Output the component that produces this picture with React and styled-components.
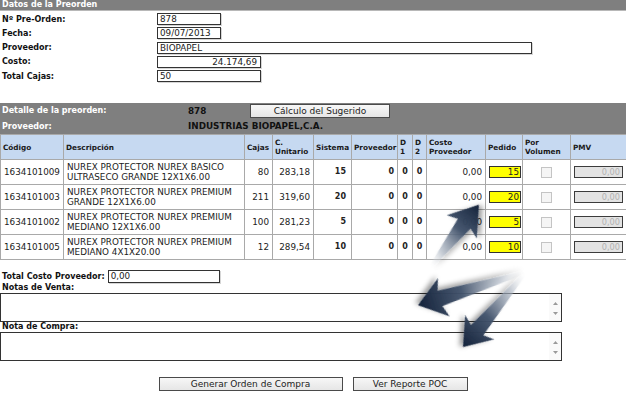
import React from 'react';
import styled, { createGlobalStyle } from 'styled-components';

const GlobalStyle = createGlobalStyle`
  html, body {
    margin: 0;
    padding: 0;
    background: #ffffff;
  }
  body {
    font-family: "DejaVu Sans", Verdana, sans-serif;
    font-size: 8.8px;
    color: #222;
  }
`;

const HEADER = {
  fields: [
    { label: 'Nº Pre-Orden:', value: '878', width: 64 },
    { label: 'Fecha:', value: '09/07/2013', width: 64 },
    { label: 'Proveedor:', value: 'BIOPAPEL', width: 375 },
    { label: 'Costo:', value: '24.174,69', width: 104, align: 'right' },
    { label: 'Total Cajas:', value: '50', width: 104 },
  ],
};

const COLUMNS = [
  { title: 'Código', width: 63 },
  { title: 'Descripción', width: 181 },
  { title: 'Cajas', width: 28 },
  { title: ['C.', 'Unitario'], width: 41 },
  { title: 'Sistema', width: 38 },
  { title: 'Proveedor', width: 46 },
  { title: ['D', '1'], width: 15 },
  { title: ['D', '2'], width: 14 },
  { title: ['Costo', 'Proveedor'], width: 59 },
  { title: 'Pedido', width: 37 },
  { title: ['Por', 'Volumen'], width: 48 },
  { title: 'PMV', width: 56 },
];

const ROWS = [
  {
    code: '1634101009',
    desc: ['NUREX PROTECTOR NUREX BASICO', 'ULTRASECO GRANDE 12X1X6.00'],
    boxes: 80,
    unit: '283,18',
    system: 15,
    order: 15,
  },
  {
    code: '1634101003',
    desc: ['NUREX PROTECTOR NUREX PREMIUM', 'GRANDE 12X1X6.00'],
    boxes: 211,
    unit: '319,60',
    system: 20,
    order: 20,
  },
  {
    code: '1634101002',
    desc: ['NUREX PROTECTOR NUREX PREMIUM', 'MEDIANO 12X1X6.00'],
    boxes: 100,
    unit: '281,23',
    system: 5,
    order: 5,
  },
  {
    code: '1634101005',
    desc: ['NUREX PROTECTOR NUREX PREMIUM', 'MEDIANO 4X1X20.00'],
    boxes: 12,
    unit: '289,54',
    system: 10,
    order: 10,
  },
];

// arrows drawn over the form: tail point, angle, length, head size
const ARROWS = [
  { x: 430, y: 268, angle: -52.3, length: 80, head: 24, wing: 19 },
  { x: 526, y: 272, angle: 162.9, length: 113, head: 23, wing: 20 },
  { x: 526, y: 272, angle: 130, length: 98, head: 22, wing: 19 },
];

const arrowPoints = ({ length, head, wing }) => {
  const base = length - head;
  return [
    [0, -1.5],
    [base, -8],
    [base - 4, -wing],
    [length, 0],
    [base - 4, wing],
    [base, 8],
    [0, 1.5],
  ]
    .map((p) => p.join(','))
    .join(' ');
};

const Arrows = () => (
  <Overlay width="626" height="395" viewBox="0 0 626 395">
    <defs>
      <linearGradient id="arrowFill" x1="0" y1="0" x2="1" y2="0">
        <stop offset="0" stopColor="#ffffff" stopOpacity="0" />
        <stop offset="0.25" stopColor="#aab4c2" stopOpacity="0.6" />
        <stop offset="0.6" stopColor="#42536c" stopOpacity="0.95" />
        <stop offset="1" stopColor="#13223a" />
      </linearGradient>
      <filter id="arrowShadow" x="-30%" y="-30%" width="160%" height="160%">
        <feDropShadow dx="2" dy="3" stdDeviation="2.4" floodColor="#000" floodOpacity="0.4" />
      </filter>
    </defs>
    {ARROWS.map((a, i) => (
      <polygon
        key={i}
        points={arrowPoints(a)}
        fill="url(#arrowFill)"
        filter="url(#arrowShadow)"
        transform={`translate(${a.x} ${a.y}) rotate(${a.angle})`}
      />
    ))}
  </Overlay>
);

const ScrollArrows = () => (
  <ScrollColumn>
    <svg width="7" height="5" viewBox="0 0 7 5">
      <path d="M1 4 L3.5 1 L6 4 Z" fill="#9a9a9a" />
    </svg>
    <svg width="7" height="5" viewBox="0 0 7 5">
      <path d="M1 1 L3.5 4 L6 1 Z" fill="#9a9a9a" />
    </svg>
  </ScrollColumn>
);

const App = () => {
  return (
    <Page>
      <GlobalStyle />
      <SectionTitle>Datos de la Preorden</SectionTitle>
      <FormGrid>
        {HEADER.fields.map((f) => (
          <React.Fragment key={f.label}>
            <FieldLabel>{f.label}</FieldLabel>
            <TextBox $width={f.width} $align={f.align}>
              {f.value}
            </TextBox>
          </React.Fragment>
        ))}
      </FormGrid>

      <DetailBand>
        <BandLabel>Detalle de la preorden:</BandLabel>
        <BandValue>878</BandValue>
        <BandButtonCell>
          <Button $width={140}>Cálculo del Sugerido</Button>
        </BandButtonCell>
        <BandLabel>Proveedor:</BandLabel>
        <BandValue $span>INDUSTRIAS BIOPAPEL,C.A.</BandValue>
      </DetailBand>

      <Table>
        <colgroup>
          {COLUMNS.map((c, i) => (
            <col key={i} style={{ width: c.width }} />
          ))}
        </colgroup>
        <thead>
          <tr>
            {COLUMNS.map((c, i) => (
              <Th key={i}>
                {Array.isArray(c.title) ? (
                  <>
                    {c.title[0]}
                    <br />
                    {c.title[1]}
                  </>
                ) : (
                  c.title
                )}
              </Th>
            ))}
          </tr>
        </thead>
        <tbody>
          {ROWS.map((r) => (
            <tr key={r.code}>
              <Td>{r.code}</Td>
              <Td>
                {r.desc[0]}
                <br />
                {r.desc[1]}
              </Td>
              <Td $align="right">{r.boxes}</Td>
              <Td $align="right">{r.unit}</Td>
              <Td $align="right" $bold $padRight={5}>
                {r.system}
              </Td>
              <Td $align="right" $bold>
                0
              </Td>
              <Td $align="center" $bold>
                0
              </Td>
              <Td $align="center" $bold>
                0
              </Td>
              <Td $align="right">0,00</Td>
              <Td $align="center">
                <OrderBox>{r.order}</OrderBox>
              </Td>
              <Td $align="center">
                <CheckBox />
              </Td>
              <Td $align="center">
                <PmvBox>0,00</PmvBox>
              </Td>
            </tr>
          ))}
        </tbody>
      </Table>

      <TotalRow>
        <FieldLabel>Total Costo Proveedor:</FieldLabel>
        <TextBox $width={112} $height={13}>
          0,00
        </TextBox>
      </TotalRow>

      <NoteLabel>Notas de Venta:</NoteLabel>
      <NoteArea>
        <NoteText />
        <ScrollArrows />
      </NoteArea>
      <NoteLabel>Nota de Compra:</NoteLabel>
      <NoteArea>
        <NoteText />
        <ScrollArrows />
      </NoteArea>

      <Actions>
        <Button $width={184}>Generar Orden de Compra</Button>
        <Button $width={115}>Ver Reporte POC</Button>
      </Actions>

      <Arrows />
    </Page>
  );
};

const Page = styled.div`
  position: relative;
  width: 626px;
  height: 395px;
  overflow: hidden;
`;

const SectionTitle = styled.div`
  height: 10px;
  line-height: 10px;
  padding-left: 2px;
  background: #7f7f7f;
  border-bottom: 1px solid #b8b8b8;
  color: #fff;
  font-size: 8px;
  font-weight: bold;
`;

const FormGrid = styled.div`
  display: grid;
  grid-template-columns: 157px auto;
  grid-auto-rows: 14.25px;
  align-items: center;
  justify-items: start;
  margin-top: 1px;
`;

const FieldLabel = styled.div`
  padding-left: 2px;
  font-size: 8px;
  font-weight: bold;
  color: #111;
  white-space: nowrap;
`;

const TextBox = styled.div`
  box-sizing: border-box;
  width: ${(p) => p.$width}px;
  height: ${(p) => p.$height || 12}px;
  line-height: ${(p) => (p.$height || 12) - 2}px;
  padding: 0 3px 0 2px;
  border: 1px solid #333;
  box-shadow: 1px 1px 0 #d6d6d6;
  background: #fff;
  text-align: ${(p) => p.$align || 'left'};
  color: #222;
  white-space: nowrap;
  overflow: hidden;
`;

const DetailBand = styled.div`
  display: grid;
  grid-template-columns: 188px 62px 1fr;
  grid-template-rows: 15px 16px;
  align-items: center;
  margin-top: 20px;
  background: #7f7f7f;
`;

const BandLabel = styled.div`
  padding-left: 2px;
  font-size: 8px;
  font-weight: bold;
  color: #fff;
`;

const BandValue = styled.div`
  grid-column: ${(p) => (p.$span ? '2 / 4' : 'auto')};
  font-size: 8.8px;
  font-weight: bold;
  color: #111;
`;

const BandButtonCell = styled.div`
  display: flex;
  align-self: start;
  padding-top: 1px;
`;

const Button = styled.button`
  box-sizing: border-box;
  width: ${(p) => p.$width}px;
  height: 14px;
  padding: 0;
  border: 1px solid #4a4a4a;
  background: linear-gradient(#f7f7f7, #e6e6e6);
  font-family: "DejaVu Sans", Verdana, sans-serif;
  font-size: 9px;
  line-height: 12px;
  color: #222;
`;

const Table = styled.table`
  width: 626px;
  table-layout: fixed;
  border-collapse: collapse;
  border: 1px solid #a9a9a9;
`;

const Th = styled.th`
  height: 24px;
  padding: 0 2px;
  background: #c6d9f1;
  border: 1px solid #a9a9a9;
  text-align: left;
  vertical-align: middle;
  font-size: 7.3px;
  font-weight: bold;
  line-height: 9px;
  color: #1a1a1a;
  white-space: nowrap;
  overflow: hidden;
`;

const Td = styled.td`
  height: 24px;
  padding: 0 ${(p) => (p.$padRight != null ? p.$padRight : 3)}px 0 3px;
  border: 1px solid #a9a9a9;
  text-align: ${(p) => p.$align || 'left'};
  vertical-align: middle;
  font-weight: ${(p) => (p.$bold ? 'bold' : 'normal')};
  font-size: ${(p) => (p.$bold ? '8px' : '8.8px')};
  line-height: 10.5px;
  color: #222;
  white-space: nowrap;
  overflow: hidden;
`;

const OrderBox = styled.div`
  box-sizing: border-box;
  width: 32px;
  height: 12px;
  margin: 0 auto;
  padding-right: 1px;
  line-height: 10px;
  background: #ffff00;
  border: 1px solid #333;
  text-align: right;
  font-size: 8.8px;
  color: #222;
`;

const CheckBox = styled.div`
  width: 9px;
  height: 9px;
  margin: 0 auto;
  background: #f5f5f5;
  border: 1px solid #c4c4c4;
`;

const PmvBox = styled.div`
  box-sizing: border-box;
  width: 49px;
  height: 12px;
  margin-left: 0;
  padding-right: 2px;
  line-height: 10px;
  background: #e3e3e3;
  border: 1px solid #3c3c3c;
  text-align: right;
  font-size: 8.2px;
  color: #b2b2b2;
`;

const TotalRow = styled.div`
  display: flex;
  align-items: center;
  gap: 3px;
  margin-top: 10px;
`;

const NoteLabel = styled.div`
  height: 10px;
  line-height: 10px;
  padding-left: 2px;
  font-size: 8px;
  font-weight: bold;
  color: #111;
`;

const NoteArea = styled.div`
  box-sizing: border-box;
  display: flex;
  width: 562px;
  height: 29px;
  border: 1px solid #333;
  background: #fff;
`;

const NoteText = styled.textarea`
  flex: 1;
  border: none;
  outline: none;
  resize: none;
  padding: 0;
  margin: 0;
  background: transparent;
`;

const ScrollColumn = styled.div`
  display: flex;
  flex-direction: column;
  justify-content: space-between;
  align-items: center;
  width: 12px;
  padding: 7px 0 5px;
  box-sizing: border-box;
  background: #fafafa;
`;

const Actions = styled.div`
  display: flex;
  justify-content: center;
  gap: 10px;
  margin-top: 16px;
`;

const Overlay = styled.svg`
  position: absolute;
  top: 0;
  left: 0;
  pointer-events: none;
`;

export default App;
